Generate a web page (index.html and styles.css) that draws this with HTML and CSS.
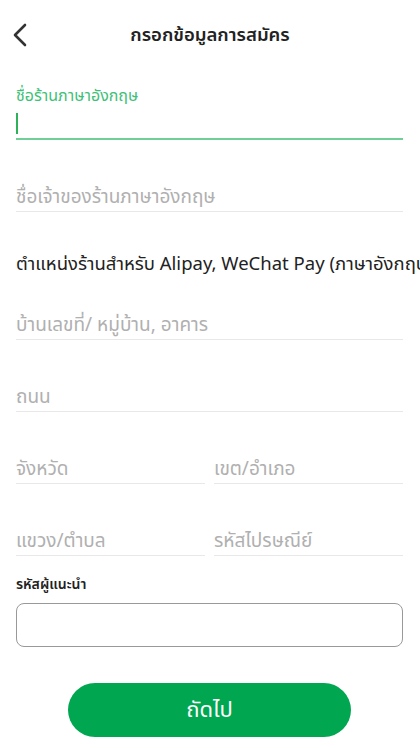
FILE: index.html
```html
<!DOCTYPE html>
<html lang="th">
<head>
    <meta charset="UTF-8">
    <meta name="viewport" content="width=device-width, initial-scale=1.0">
    <title>กรอกข้อมูลการสมัคร</title>
    <link rel="stylesheet" href="styles.css">
</head>
<body>
<div class="page">
    <div class="header">
        <button class="back" aria-label="back">
            <svg width="16" height="24" viewBox="0 0 16 24">
                <path d="M13 2 L3 12 L13 22" fill="none" stroke="#333" stroke-width="2.6" stroke-linecap="round" stroke-linejoin="round"/>
            </svg>
        </button>
        <h1>กรอกข้อมูลการสมัคร</h1>
    </div>

    <form class="form">
        <div class="field active">
            <label>ชื่อร้านภาษาอังกฤษ</label>
            <div class="line"><span class="caret"></span></div>
        </div>

        <div class="field">
            <div class="line">ชื่อเจ้าของร้านภาษาอังกฤษ</div>
        </div>

        <div class="section">ตำแหน่งร้านสำหรับ Alipay, WeChat Pay (ภาษาอังกฤษ)</div>

        <div class="field">
            <div class="line">บ้านเลขที่/ หมู่บ้าน, อาคาร</div>
        </div>

        <div class="field">
            <div class="line">ถนน</div>
        </div>

        <div class="row">
            <div class="field">
                <div class="line">จังหวัด</div>
            </div>
            <div class="field">
                <div class="line">เขต/อำเภอ</div>
            </div>
        </div>

        <div class="row">
            <div class="field">
                <div class="line">แขวง/ตำบล</div>
            </div>
            <div class="field">
                <div class="line">รหัสไปรษณีย์</div>
            </div>
        </div>

        <div class="referral">
            <label>รหัสผู้แนะนำ</label>
            <div class="box"></div>
        </div>

        <div class="actions">
            <button type="button" class="next">ถัดไป</button>
        </div>
    </form>
</div>
</body>
</html>
```

FILE: styles.css
```css
body {
    margin: 0;
    background-color: white;
    font-family: "Noto Sans", "Noto Sans Thai", Roboto, sans-serif;
    color: #222;
}

.page {
    width: 420px;
    overflow: hidden;
}

.header {
    position: relative;
    height: 70px;
    display: flex;
    align-items: center;
    justify-content: center;
}

.header h1 {
    margin: 0;
    font-size: 18.5px;
    font-weight: 600;
    color: #222;
}

.back {
    position: absolute;
    left: 12px;
    top: 23px;
    padding: 0;
    background: none;
    border: none;
}

.form {
    padding: 0 17px 0 16px;
    display: flex;
    flex-direction: column;
}

.field {
    display: flex;
    flex-direction: column;
}

.field label {
    font-size: 16px;
    color: #3fbf78;
    height: 18px;
    line-height: 18px;
    margin-top: 16px;
}

.line {
    height: 30px;
    line-height: 30px;
    border-bottom: 1px solid #e8e8e8;
    font-size: 19px;
    color: #b0b0b0;
    margin-top: 41px;
    white-space: nowrap;
    overflow: hidden;
}

.field.active .line {
    margin-top: 4px;
    border-bottom: 2px solid #6fcf97;
    display: flex;
    align-items: center;
}

.caret {
    width: 2px;
    height: 21px;
    background-color: #2db25a;
}

.section {
    font-size: 18.5px;
    color: #222;
    white-space: nowrap;
    margin-top: 38px;
    margin-right: -120px;
}

.section + .field .line {
    margin-top: 31px;
}

.row {
    display: flex;
    gap: 9px;
}

.row .field {
    flex: 1;
}

.referral {
    display: flex;
    flex-direction: column;
}

.referral label {
    font-size: 14px;
    font-weight: 600;
    color: #222;
    margin-top: 18px;
}

.box {
    height: 42px;
    border: 1px solid #999;
    border-radius: 8px;
    margin-top: 8px;
}

.actions {
    display: flex;
    justify-content: center;
    margin-top: 36px;
}

.next {
    width: 283px;
    height: 54px;
    border: none;
    border-radius: 27px;
    background-color: #00a650;
    color: white;
    font-family: inherit;
    font-size: 22px;
    cursor: pointer;
}
```
